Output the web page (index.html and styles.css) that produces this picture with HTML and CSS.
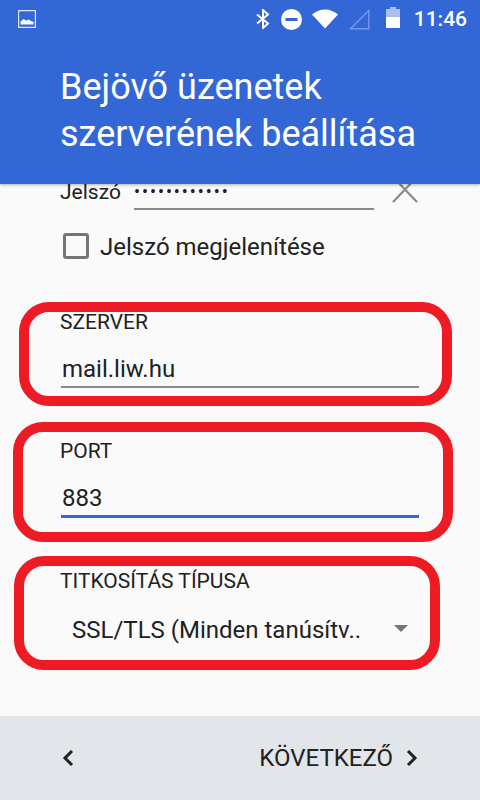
FILE: index.html
```html
<!DOCTYPE html>
<html lang="hu">
  <head>
    <meta charset="UTF-8" />
    <meta name="viewport" content="width=device-width, initial-scale=1.0" />
    <title>Bejövő üzenetek szerverének beállítása</title>
    <link rel="stylesheet" href="styles.css">
  </head>
  <body>
    <div class="screen">
      <header class="header">
        <div class="status-bar">
          <svg class="icon-image" width="18" height="18" viewBox="0 0 18 18">
            <path d="M0 0h18v18H0z M1.2 1.2v15.6h15.6V1.2z" fill="#dfe8fa" fill-rule="evenodd"/>
            <path d="M2.5 14.5v-3l3-2.5 3 1.800 2-1.300 2.500 1.500 2.500 1v2.500z" fill="#fff"/>
          </svg>
          <div class="status-icons">
            <svg width="14" height="20" viewBox="0 0 14 20">
              <path d="M1 5.500l11 9-5 4.500V1l5 4.500-11 9" fill="none" stroke="#fff" stroke-width="2"/>
            </svg>
            <svg class="icon-dnd" width="21" height="21" viewBox="0 0 21 21">
              <circle cx="10.500" cy="10.500" r="10.500" fill="#fff"/>
              <rect x="4.500" y="9" width="12" height="3" fill="#3367d6"/>
            </svg>
            <svg class="icon-wifi" width="26" height="20" viewBox="0 0 26 20">
              <path d="M0 5.500C3.500 2.500 8 .5 13 .5s9.500 2 13 5L13 19.500z" fill="#fff"/>
            </svg>
            <svg class="icon-signal" width="21" height="21" viewBox="0 0 21 21">
              <path d="M1.500 19.800L19.800 1.500v18.300z" fill="none" stroke="#7297e4" stroke-width="1.500"/>
            </svg>
            <svg class="icon-battery" width="14" height="21" viewBox="0 0 14 21">
              <path d="M4 0h6v2h4v8H0V2h4z" fill="#a9c0ef"/>
              <path d="M0 10h14v11H0z" fill="#fff"/>
            </svg>
            <span class="clock">11:46</span>
          </div>
        </div>
        <h1 class="title">Bejövő üzenetek<br>szerverének beállítása</h1>
      </header>

      <main class="content">
        <div class="password-row">
          <span class="password-label">Jelszó</span>
          <span class="password-input">••••••••••••</span>
          <svg class="icon-clear" width="26" height="32" viewBox="0 0 26 32">
            <path d="M1 6l24 25M25 6L1 31" fill="none" stroke="#8a8a8a" stroke-width="2.200"/>
          </svg>
        </div>

        <label class="show-password">
          <span class="checkbox"></span>
          <span>Jelszó megjelenítése</span>
        </label>

        <div class="field field-server">
          <div class="field-label">SZERVER</div>
          <div class="field-value">mail.liw.hu</div>
        </div>

        <div class="field field-port">
          <div class="field-label">PORT</div>
          <div class="field-value field-focused">883</div>
        </div>

        <div class="field field-security">
          <div class="field-label">TITKOSÍTÁS TÍPUSA</div>
          <div class="select">
            <span>SSL/TLS (Minden tanúsítv..</span>
            <span class="select-arrow"></span>
          </div>
        </div>

        <!-- Red annotation frames drawn over the form -->
        <div class="frame frame-server"></div>
        <div class="frame frame-port"></div>
        <div class="frame frame-security"></div>
      </main>

      <footer class="footer">
        <svg width="12" height="18" viewBox="0 0 12 18">
          <path d="M10 2L3 9l7 7" fill="none" stroke="#212121" stroke-width="3"/>
        </svg>
        <div class="next">
          <span>KÖVETKEZŐ</span>
          <svg width="12" height="18" viewBox="0 0 12 18">
            <path d="M2 2l7 7-7 7" fill="none" stroke="#212121" stroke-width="3"/>
          </svg>
        </div>
      </footer>
    </div>
  </body>
</html>
```

FILE: styles.css
```css
html,
body {
  margin: 0;
  padding: 0;
}

body {
  font-family: Roboto, "Liberation Sans", sans-serif;
  color: #212121;
  background-color: #fafafa;
}

.screen {
  width: 480px;
  height: 800px;
  display: flex;
  flex-direction: column;
  overflow: hidden;
}

.header {
  height: 184px;
  flex-shrink: 0;
  background-color: #3367d6;
  color: #fff;
  box-shadow: 0 1px 3px rgba(0, 0, 0, 0.3);
  position: relative;
  z-index: 2;
}

.status-bar {
  height: 38px;
  display: flex;
  justify-content: space-between;
  align-items: center;
  padding: 0 13px 0 18px;
}

.status-icons {
  display: flex;
  align-items: center;
}

.icon-dnd {
  margin-left: 11px;
}

.icon-wifi {
  margin-left: 10px;
}

.icon-signal {
  margin-left: 11px;
}

.icon-battery {
  margin-left: 16px;
  margin-bottom: 4px;
}

.clock {
  margin-left: 14px;
  font-size: 21px;
  font-weight: 500;
}

.title {
  margin: 26px 0 0 60px;
  font-size: 36px;
  line-height: 47px;
  font-weight: 400;
  white-space: nowrap;
}

.content {
  flex: 1;
  position: relative;
  overflow: hidden;
  background-color: #fafafa;
}

.password-row {
  height: 26px;
  display: flex;
  align-items: flex-end;
  padding-left: 60px;
}

.password-label {
  width: 74px;
  font-size: 21px;
  line-height: 24px;
  margin-bottom: 6px;
  flex-shrink: 0;
}

.password-input {
  width: 240px;
  height: 22px;
  padding-top: 4px;
  border-bottom: 2px solid #8a8a8a;
  font-size: 18px;
  line-height: 12px;
  letter-spacing: 1.900px;
  box-sizing: content-box;
}

.icon-clear {
  margin: 0 0 7px 18px;
}

.show-password {
  display: flex;
  align-items: center;
  gap: 11px;
  height: 26px;
  margin: 24px 0 0 63px;
  font-size: 24px;
  line-height: 26px;
}

.checkbox {
  width: 20px;
  height: 20px;
  margin-bottom: 2px;
  border: 3px solid #757575;
  border-radius: 3px;
  flex-shrink: 0;
}

.field {
  padding-left: 61px;
  width: 358px;
}

.field-label {
  font-size: 21px;
  line-height: 22px;
  margin-left: -1px;
}

.field-value {
  font-size: 24px;
  line-height: 30px;
  padding: 0 1px 2px;
  border-bottom: 2px solid #8a8a8a;
}

.field-server {
  margin-top: 51px;
}

.field-server .field-value {
  margin-top: 21px;
}

.field-port {
  margin-top: 52px;
}

.field-port .field-value {
  margin-top: 21px;
  padding-bottom: 2px;
  border-bottom: 3px solid #3367d6;
}

.field-security {
  margin-top: 52px;
}

.select {
  display: flex;
  justify-content: space-between;
  align-items: center;
  margin-top: 23px;
  padding-left: 11px;
  font-size: 24px;
  line-height: 30px;
}

.select-arrow {
  width: 0;
  height: 0;
  border-left: 7px solid transparent;
  border-right: 7px solid transparent;
  border-top: 7px solid #757575;
  margin: 0 11px 4px 0;
}

.frame {
  position: absolute;
  border: 10px solid #ed1c24;
  border-radius: 30px;
  box-sizing: border-box;
}

.frame-server {
  left: 19px;
  top: 118px;
  width: 433px;
  height: 104px;
}

.frame-port {
  left: 13px;
  top: 238px;
  width: 440px;
  height: 120px;
}

.frame-security {
  left: 14px;
  top: 372px;
  width: 426px;
  height: 114px;
}

.footer {
  height: 84px;
  flex-shrink: 0;
  display: flex;
  justify-content: space-between;
  align-items: center;
  padding: 0 62px 0 62px;
  background-color: #e2e5e9;
}

.next {
  display: flex;
  align-items: center;
  gap: 13px;
  font-size: 24px;
}
```
